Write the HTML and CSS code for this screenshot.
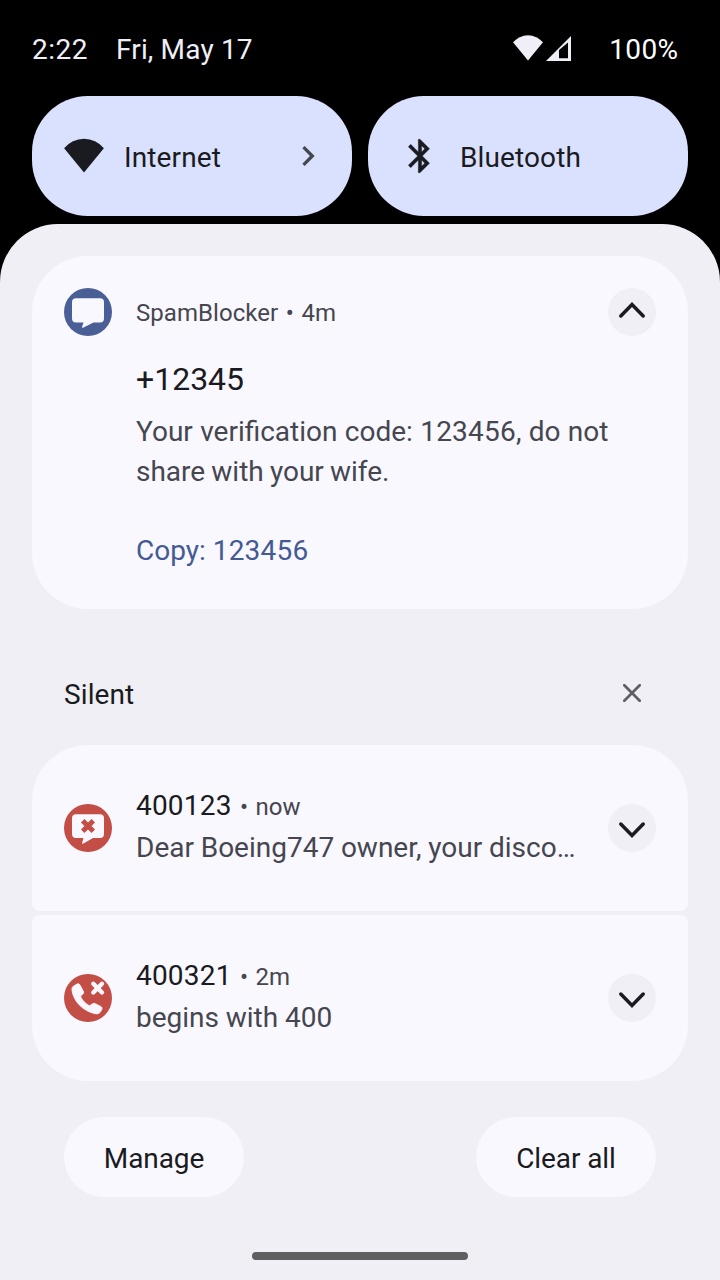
FILE: index.html
```html
<!DOCTYPE html>
<html lang="en">
<head>
<meta charset="utf-8">
<title>Notifications</title>
<link rel="stylesheet" href="styles.css">
</head>
<body>
<div class="screen">
  <header class="status">
    <span class="clock">2:22</span>
    <span class="date">Fri, May 17</span>
    <svg class="status-wifi" viewBox="0 0 30 26"><path d="M0 7.2A19.8 19.8 0 0 1 30 7.2L15 25.4z" fill="#f0eff7"/></svg>
    <svg class="status-signal" viewBox="0 0 25 25"><path fill-rule="evenodd" d="M0 25L25 0V25zM13 14V22.2H22V6.500z" fill="#f0eff7"/></svg>
    <span class="battery">100%</span>
  </header>

  <section class="tiles">
    <div class="tile">
      <svg class="tile-icon" viewBox="0 0 40 40"><path d="M.1 12.3A25.5 25.5 0 0 1 39.900 12.3L20 36.6z" fill="#1a1b20"/></svg>
      <span class="tile-label">Internet</span>
      <svg class="tile-icon" viewBox="0 0 24 24"><path d="M10 6 8.59 7.41 13.17 12l-4.58 4.59L10 18l6-6z" fill="#45464f"/></svg>
    </div>
    <div class="tile">
      <svg class="tile-icon" viewBox="0 0 24 24"><path d="M17.71 7.71L12 2h-1v7.59L6.41 5 5 6.41 10.59 12 5 17.59 6.41 19 11 14.41V22h1l5.71-5.71-4.3-4.29 4.3-4.29zM13 5.83l1.88 1.88L13 9.59V5.83zm1.88 10.46L13 18.17v-3.76l1.88 1.88z" fill="#1a1b20" stroke="#1a1b20" stroke-width=".25"/></svg>
      <span class="tile-label">Bluetooth</span>
    </div>
  </section>

  <main class="panel">
    <article class="card card-expanded">
      <svg class="badge" viewBox="0 0 48 48"><circle cx="24" cy="24" r="24" fill="#4a5f96"/><path d="M12 10.2H36a4 4 0 0 1 4 4V30.600a4 4 0 0 1-4 4H29.500L19 39.700Q17.600 40.200 18.200 38.600L19.500 34.600H12a4 4 0 0 1-4-4V14.200a4 4 0 0 1 4-4z" fill="#f9f8ff"/></svg>
      <div class="content">
        <div class="app-line"><span class="app-name">SpamBlocker</span> <span class="dot">•</span> 4m</div>
        <h2 class="title">+12345</h2>
        <p class="message"><span class="line-first">Your verification code: <span class="num">123456</span>, do not</span><br><span class="line-last">share with your wife.</span></p>
        <a class="action">Copy: <span class="num">123456</span></a>
      </div>
      <svg class="toggle" viewBox="0 0 48 48"><circle cx="24" cy="24" r="24" fill="#f0eff5"/><path class="chevron" d="M12.800 28L24 16.600 35.200 28"/></svg>
    </article>

    <div class="section-head">
      <span class="section-label">Silent</span>
      <svg class="close" viewBox="0 0 18 18"><path d="M1.300 1.300L16.700 16.700M16.700 1.300L1.300 16.700"/></svg>
    </div>

    <div class="group">
      <article class="card card-row">
        <svg class="badge" viewBox="0 0 48 48"><circle cx="24" cy="24" r="24" fill="#c24e45"/><path d="M12 10.200H36a4 4 0 0 1 4 4V30a4 4 0 0 1-4 4H29L19 39.700Q17.600 40.200 18.200 38.600L19.500 34H12a4 4 0 0 1-4-4V14.200a4 4 0 0 1 4-4z" fill="#f9f8ff"/><path d="M18.700 16.700L29.300 27.300M29.300 16.700L18.700 27.300" stroke="#c24e45" stroke-width="5"/></svg>
        <div class="content">
          <div class="sender"><span class="num">400123</span><span class="age"> <span class="dot">•</span> now</span></div>
          <div class="preview">Dear Boeing747 owner, your disco…</div>
        </div>
        <svg class="toggle" viewBox="0 0 48 48"><circle cx="24" cy="24" r="24" fill="#f0eff5"/><path class="chevron" d="M12.800 20L24 31.400 35.200 20"/></svg>
      </article>
      <article class="card card-row">
        <svg class="badge" viewBox="0 0 48 48"><circle cx="24" cy="24" r="24" fill="#c24e45"/><path d="M9 12.500L13 10Q15 9 16 11L19.500 17.500Q20.300 19.300 18.500 20.500L16.500 22Q18.500 28 25.500 31.800L28.500 29.800Q30 28.700 31.500 29.800L37 32.600Q38.900 33.600 37.800 35.500L36 38.500Q34.500 40.600 31 39.700C19 37 9.500 27.500 8 16.500Q7.500 13.500 9 12.500z" fill="#f9f8ff" stroke="#f9f8ff" stroke-width=".8"/><path d="M29.300 9.800L38 18.500M38 9.800L29.300 18.500" stroke="#f9f8ff" stroke-width="4.400" stroke-linecap="round"/></svg>
        <div class="content">
          <div class="sender"><span class="num">400321</span><span class="age"> <span class="dot">•</span> 2m</span></div>
          <div class="preview">begins with 400</div>
        </div>
        <svg class="toggle" viewBox="0 0 48 48"><circle cx="24" cy="24" r="24" fill="#f0eff5"/><path class="chevron" d="M12.800 20L24 31.400 35.200 20"/></svg>
      </article>
    </div>

    <footer class="footer">
      <button class="pill">Manage</button>
      <button class="pill">Clear all</button>
    </footer>
    <div class="home-bar"></div>
  </main>
</div>
</body>
</html>
```
FILE: styles.css
```css
* { box-sizing: border-box; }

body {
  margin: 0;
  background: #000;
  font-family: Roboto, "Liberation Sans", sans-serif;
  font-size: 28px;
  line-height: 40px;
  color: #1a1b20;
}

h2, p { margin: 0; font-weight: 400; }
svg { display: block; flex: none; }
.num { letter-spacing: 0.2px; }

.screen {
  width: 720px;
  height: 1280px;
  display: flex;
  flex-direction: column;
  overflow: hidden;
}

.status {
  height: 96px;
  padding: 3px 41.5px 0 32px;
  display: flex;
  align-items: center;
  color: #f0eff7;
}
.clock { letter-spacing: 0.5px; }
.date { margin-left: 28px; margin-right: auto; letter-spacing: 0.15px; }
.status-wifi { width: 30px; height: 26px; margin-top: -3px; }
.status-signal { width: 25px; height: 25px; margin: -2px 38px 0 3px; }
.battery { color: #fff; letter-spacing: 0.4px; }

.tiles {
  display: grid;
  grid-template-columns: 1fr 1fr;
  gap: 16px;
  padding: 0 32px 8px;
}
.tile {
  height: 120px;
  padding: 0 24px 0 32px;
  display: flex;
  align-items: center;
  gap: 20px;
  border-radius: 56px;
  background: #dae1ff;
}
.tile-icon { width: 40px; height: 40px; }
.tile-label { flex: 1; padding-top: 3px; letter-spacing: 0.12px; }

.panel {
  flex: 1;
  padding: 32px 32px 0;
  border-radius: 58px 58px 0 0;
  background: #f0eff5;
}

.card {
  display: flex;
  gap: 24px;
  padding: 0 32px;
  background: #f9f8ff;
}
.content { flex: 1; min-width: 0; white-space: nowrap; }
.badge, .toggle { width: 48px; height: 48px; }
.chevron {
  fill: none;
  stroke: #1a1b20;
  stroke-width: 3.5;
  stroke-linecap: round;
}

.card-expanded {
  height: 353px;
  padding-top: 32px;
  border-radius: 56px;
}
.app-line { height: 48px; padding-top: 5px; font-size: 24px; color: #45464f; }
.app-name { letter-spacing: 0.05px; }
.app-line .dot { margin: 0 1.7px 0 1.7px; }
.title { margin-top: 23px; font-size: 32px; letter-spacing: 0; }
.message { margin-top: 13px; color: #45464f; }
.line-first { word-spacing: 0.4px; }
.line-last { word-spacing: -0.8px; }
.action { display: block; margin-top: 39px; color: #435a94; }

.section-head {
  height: 136px;
  padding: 34px 47px 0 32px;
  display: flex;
  align-items: center;
  justify-content: space-between;
}
.section-label { padding-top: 2px; letter-spacing: 0.1px; }
.close { width: 18px; height: 18px; margin-top: -3px; }
.close path { stroke: #5e5f64; stroke-width: 2.7; stroke-linecap: round; }

.group { display: grid; grid-template-columns: minmax(0, 1fr); gap: 4px; }
.card-row {
  height: 166px;
  align-items: center;
  border-radius: 8px;
}
.card-row:first-child { border-radius: 56px 56px 8px 8px; }
.card-row:last-child { border-radius: 8px 8px 56px 56px; }
.card-row .content { padding-bottom: 2px; }
.sender { height: 42px; }
.age { font-size: 24px; color: #45464f; }
.age .dot { margin: 0 1.5px 0 2.3px; }
.preview { color: #45464f; word-spacing: -0.2px; }

.footer {
  display: flex;
  justify-content: space-between;
  padding: 36px 32px 55px;
}
.pill {
  width: 180px;
  height: 80px;
  padding: 3px 0 0;
  border: 0;
  border-radius: 40px;
  background: #f9f8ff;
  font: inherit;
  letter-spacing: -0.1px;
  color: inherit;
}
.home-bar {
  width: 216px;
  height: 8px;
  margin: 0 auto;
  border-radius: 4px;
  background: #5f5f62;
}
```
